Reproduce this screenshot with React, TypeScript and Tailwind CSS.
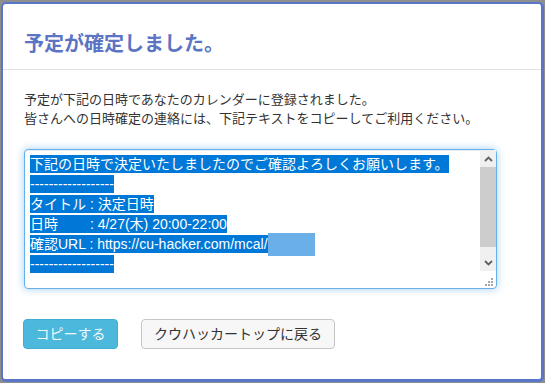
import React from 'react';

const lines = [
  '下記の日時で決定いたしましたのでご確認よろしくお願いします。',
  '------------------',
  'タイトル : 決定日時',
  '日時　　 : 4/27(木) 20:00-22:00',
  '確認URL : https://cu-hacker.com/mcal/',
  '------------------',
];

function Chevron({ up }: { up?: boolean }) {
  return (
    <svg width="9" height="6" viewBox="0 0 9 6" className={up ? '' : 'rotate-180'}>
      <path d="M1 5 L4.5 1.5 L8 5" fill="none" stroke="#606060" strokeWidth="1.8" />
    </svg>
  );
}

export default function App() {
  return (
    <div
      className="w-[545px] h-[383px] bg-[#8e8e8e] pt-[2px] pl-px pr-px pb-px"
      style={{ fontFamily: '"Liberation Sans", "Noto Sans CJK JP", sans-serif' }}
    >
      <div className="h-full bg-white border-[#5a76c9] border-l-2 border-t-2 border-r-[3px] border-b-[3px] rounded-[5px] flex flex-col">
        {/* header */}
        <div className="h-[66px] pt-[26px] px-[21px] border-b border-[#e2e2e2]">
          <h2 className="text-[20px] leading-[28px] font-bold text-[#5b74c4]">予定が確定しました。</h2>
        </div>

        {/* body */}
        <div className="pt-[20px] px-[21px]">
          <p className="text-[13px] leading-[19px] text-[#333]">
            予定が下記の日時であなたのカレンダーに登録されました。
            <br />
            皆さんへの日時確定の連絡には、下記テキストをコピーしてご利用ください。
          </p>

          {/* textarea */}
          <div className="relative mt-[21px] w-[473px] h-[140px] border border-[#66afe9] rounded-[4px] bg-white shadow-[inset_0_1px_1px_rgba(0,0,0,0.075),0_0_8px_rgba(102,175,233,0.6)] flex">
            <div className="flex-1 pl-[5px] pt-[4px] text-[14px] text-white whitespace-pre">
              {lines.map((line, i) => (
                <div key={i} className="h-[20px] flex items-center">
                  <span className="inline-block h-[18px] leading-[18px] bg-[#0078d7]">{line}</span>
                  {i === 4 && <span className="inline-block w-[47px] h-[23px] bg-[#6aafe8]" />}
                </div>
              ))}
            </div>
            <div className="w-[16px] h-[121px] bg-[#f0f0f0] flex flex-col">
              <div className="h-[17px] flex items-center justify-center">
                <Chevron up />
              </div>
              <div className="h-[80px] bg-[#cdcdcd]" />
              <div className="flex-1" />
              <div className="h-[17px] flex items-center justify-center">
                <Chevron />
              </div>
            </div>
            <svg width="8" height="8" viewBox="0 0 8 8" className="absolute right-[3px] bottom-[2px]">
              <rect x="6" y="0" width="2" height="2" fill="#a8a8a8" />
              <rect x="3" y="3" width="2" height="2" fill="#a8a8a8" />
              <rect x="6" y="3" width="2" height="2" fill="#a8a8a8" />
              <rect x="0" y="6" width="2" height="2" fill="#a8a8a8" />
              <rect x="3" y="6" width="2" height="2" fill="#a8a8a8" />
              <rect x="6" y="6" width="2" height="2" fill="#a8a8a8" />
            </svg>
          </div>

          {/* buttons */}
          <div className="mt-[30px] -ml-px flex gap-[23px] text-[14px]">
            <button className="w-[95px] h-[30px] rounded-[4px] bg-[#4bb8dc] border border-[#3eadd3] text-[#eef8fc]">
              コピーする
            </button>
            <button className="w-[194px] h-[30px] rounded-[4px] bg-[#f7f7f7] border border-[#c6c6c6] text-[#333]">
              クウハッカートップに戻る
            </button>
          </div>
        </div>
      </div>
    </div>
  );
}
